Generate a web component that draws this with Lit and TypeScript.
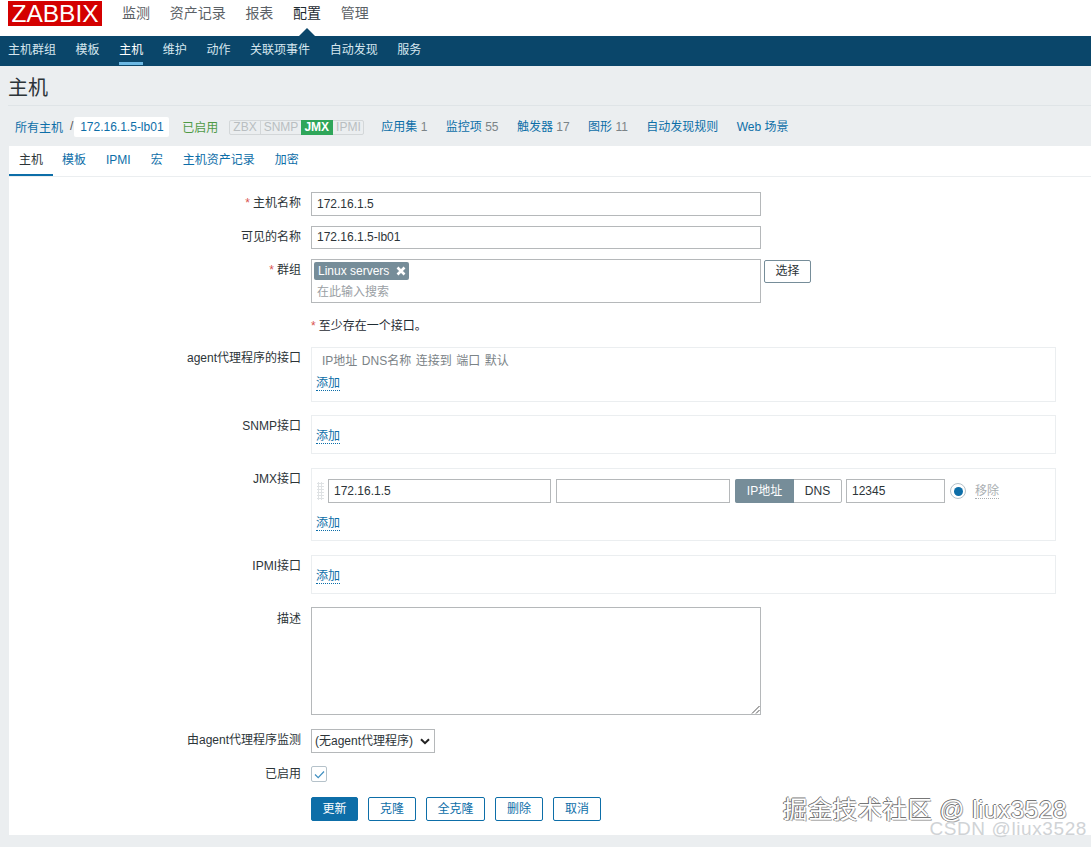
import { LitElement, html, css } from "lit";
import { customElement } from "lit/decorators.js";

@customElement("app-root")
export class AppRoot extends LitElement {
  static styles = css`
    :host { display: block; width: 1091px; height: 847px; position: relative; overflow: hidden; background: #ebeef0;
      font-family: "Liberation Sans", "Noto Sans CJK SC", sans-serif; font-size: 12px; color: #1f2c33; }
    * { box-sizing: border-box; }
    a { color: #0d6ea8; text-decoration: none; }
    .top { height: 36px; background: #fff; display: flex; align-items: flex-start; padding: 1px 0 0 8px; }
    .logo { width: 94px; height: 25px; background: #d40000; color: #fff; font-size: 24.5px; line-height: 26px; text-align: center; white-space: nowrap; }
    .mainnav { display: flex; gap: 19.7px; margin-left: 20px; font-size: 14px; line-height: 24px; color: #5b6166; }
    .mainnav .on { color: #1f2c33; position: relative; }
    .mainnav .on::after { content: ""; position: absolute; left: 50%; margin-left: -8px; top: 27px; border: 8px solid transparent; border-top: 0; border-bottom: 8px solid #0a466a; }
    .sub { height: 30px; background: #0a466a; display: flex; gap: 19.6px; padding-left: 8px; color: #d6e6ef; line-height: 28px; }
    .sub .on { color: #fff; border-bottom: 3px solid #6cb8e3; height: 29px; }
    h1 { margin: 0 0 0 8px; height: 39px; font-size: 20px; font-weight: 400; line-height: 44px; color: #2c3438; }
    .rule { height: 1px; background: #dfe4e7; margin-left: 8px; }
    .crumbs { height: 40px; display: flex; align-items: center; padding-left: 15px; white-space: nowrap; }
    .crumbs .sep { color: #555; margin: 0 1px 0 7px; }
    .crumbs .cur { background: #fff; border-radius: 2px; height: 20px; line-height: 20px; color: #0d6ea8; width: 95px; text-align: center; margin-top: 2px; }
    .crumbs .en { color: #4f9a45; margin-left: 13px; width: 47px; }
    .stat { display: flex; height: 15px; border: 1px solid #d3d7d9; border-radius: 2px; line-height: 13px; color: #b9bec1; width: 135px; margin-top: 2px; }
    .stat span { padding: 0 3px; flex: none; border-right: 1px solid #d3d7d9; }
    .stat span:last-child { border: 0; }
    .stat .jmx { background: #2fa65a; color: #fff; font-weight: 700; border-color: #2fa65a; height: 15px; margin: -1px 0 0 -1px; line-height: 15px; }
    .crumbs .gray { color: #7b8387; }
    .links { display: flex; margin: -1px 0 0 17px; gap: 18.4px; }
    .card { margin-left: 9px; height: 689px; background: #fff; }
    .tabs { height: 31px; display: flex; gap: 20px; border-bottom: 1px solid #ebeef0; line-height: 29px; }
    .tabs a { display: block; }
    .tabs .on { color: #2c3438; width: 44px; text-align: center; height: 30px; border-bottom: 2px solid #0d6ea8; margin-right: -11px; }
    .form { display: grid; grid-template-columns: 292px 745px; column-gap: 10px; padding-top: 15px; align-items: start; }
    .lab { text-align: right; line-height: 20px; padding-top: 1px; color: #2c3438; }
    .lab.short { height: 19px; }
    .req { color: #d9534f; margin-right: 3px; }
    .inp { border: 1px solid #b5b8ba; height: 24px; line-height: 22px; padding: 0 5px; background: #fff; color: #2c3438; white-space: nowrap; flex: none; }
    .w450 { width: 450px; }
    .h23 { height: 23px; line-height: 21px; }
    .mt10 { margin-top: 10px; }
    .mt12 { margin-top: 12px; }
    .mt13 { margin-top: 13px; }
    .mt14 { margin-top: 14px; }
    .groupwrap { display: flex; gap: 3px; }
    .group { width: 450px; height: 44px; border: 1px solid #b5b8ba; padding: 2px 2px; }
    .tag { display: inline-flex; align-items: center; gap: 7px; height: 18px; background: #768d99; color: #fff; border-radius: 2px; padding: 0 4px 1px; width: 95px; white-space: nowrap; }
    .tag svg { width: 10px; height: 10px; flex: none; }
    .ph { color: #9aa0a4; line-height: 18px; margin: 3px 0 0 3px; }
    .btn { border: 1px solid #768d99; border-radius: 2px; height: 23px; width: 47px; line-height: 21px; text-align: center; margin-top: 1px; color: #2c3438; }
    .note { line-height: 18px; }
    .box { border: 1px solid #ebeef0; padding: 5px 4px; }
    .b-agent { height: 55px; }
    .b-empty { height: 39px; padding-top: 13px; }
    .b-jmx { height: 73px; padding-top: 10px; }
    .heads { display: flex; gap: 4.5px; color: #7b8387; padding-left: 6px; height: 23px; line-height: 16px; }
    .add { display: inline-block; color: #0d6ea8; border-bottom: 1px dotted #0d6ea8; line-height: 15px; height: 15px; }
    .add.low { margin-top: 13px; }
    .jmxrow { display: flex; align-items: center; height: 24px; }
    .grip { width: 7px; height: 18px; margin: 0 4px 0 1px; background-image: radial-gradient(#dfe2e4 1px, transparent 1.1px); background-size: 3px 3px; }
    .w-ip { width: 223px; }
    .w-dns { width: 174px; margin-left: 5px; }
    .w-port { width: 99px; }
    .seg { display: flex; flex: none; width: 107px; height: 24px; margin: 0 4px 0 5px; border: 1px solid #b5b8ba; border-radius: 2px; line-height: 22px; text-align: center; color: #2c3438; }
    .seg b { font-weight: 400; width: 59px; background: #768d99; color: #fff; margin: -1px 0 -1px -1px; line-height: 24px; border-radius: 2px 0 0 2px; }
    .seg span { flex: 1; }
    .radio { width: 16px; height: 16px; border-radius: 50%; border: 1px solid #b5c2ca; margin: 0 0 0 5px; display: flex; align-items: center; justify-content: center; flex: none; }
    .radio i { width: 9px; height: 9px; border-radius: 50%; background: #0d6ea8; display: block; }
    .rm { color: #a9aeb1; border-bottom: 1px dotted #a9aeb1; line-height: 14px; margin-left: 9px; }
    .ta { width: 450px; height: 108px; border: 1px solid #b5b8ba; position: relative; }
    .ta svg { position: absolute; right: 0; bottom: 0; width: 9px; height: 9px; }
    .sel { width: 124px; height: 24px; border: 1px solid #b5b8ba; line-height: 22px; padding-left: 3px; display: flex; align-items: center; color: #2c3438; white-space: nowrap; }
    .sel svg { width: 10px; height: 7px; margin-left: 7px; }
    .cb { width: 16px; height: 16px; border: 1px solid #b5c2ca; border-radius: 2px; display: flex; align-items: center; justify-content: center; }
    .cb svg { width: 11px; height: 9px; }
    .actions { display: flex; gap: 10px; margin-top: 15px; grid-column: 2; }
    .actions span { height: 24px; width: 48px; border: 1px solid #0d6ea8; border-radius: 2px; color: #0d6ea8; line-height: 22px; text-align: center; }
    .actions .pri { background: #0d6ea8; color: #fff; width: 47px; }
    .actions .wide { width: 59px; }
    .wm { position: absolute; left: 783px; top: 796px; font-size: 24.4px; line-height: 28px; color: #fff; letter-spacing: .5px; text-shadow: -1px 0 #666, 0 -1px #777, 1px 1px #aaa; white-space: nowrap; }
    .wm2 { position: absolute; right: 4px; top: 818px; font-size: 19px; line-height: 21px; color: #d0d3d6; letter-spacing: .6px; white-space: nowrap; }
  `;

  render() {
    const x = html`<svg viewBox="0 0 10 10"><path d="M1.5 1.5l7 7M8.5 1.5l-7 7" stroke="#fff" stroke-width="2.6" fill="none"/></svg>`;
    return html`
      <div class="top">
        <div class="logo">ZABBIX</div>
        <div class="mainnav">
          <span>监测</span><span>资产记录</span><span>报表</span><span class="on">配置</span><span>管理</span>
        </div>
      </div>
      <div class="sub">
        <span>主机群组</span><span>模板</span><span class="on">主机</span><span>维护</span><span>动作</span><span>关联项事件</span><span>自动发现</span><span>服务</span>
      </div>
      <h1>主机</h1>
      <div class="rule"></div>
      <div class="crumbs">
        <a>所有主机</a><span class="sep">/</span><span class="cur">172.16.1.5-lb01</span>
        <span class="en">已启用</span>
        <div class="stat"><span>ZBX</span><span>SNMP</span><span class="jmx">JMX</span><span>IPMI</span></div>
        <div class="links">
          <span><a>应用集</a> <span class="gray">1</span></span>
          <span><a>监控项</a> <span class="gray">55</span></span>
          <span><a>触发器</a> <span class="gray">17</span></span>
          <span><a>图形</a> <span class="gray">11</span></span>
          <a>自动发现规则</a>
          <a>Web 场景</a>
        </div>
      </div>
      <div class="card">
        <div class="tabs">
          <a class="on">主机</a><a>模板</a><a>IPMI</a><a>宏</a><a>主机资产记录</a><a>加密</a>
        </div>
        <div class="form">
          <div class="lab"><span class="req">*</span>主机名称</div>
          <div class="inp w450">172.16.1.5</div>

          <div class="lab mt10">可见的名称</div>
          <div class="inp w450 h23 mt10">172.16.1.5-lb01</div>

          <div class="lab mt10"><span class="req">*</span>群组</div>
          <div class="groupwrap mt10">
            <div class="group">
              <div class="tag">Linux servers ${x}</div>
              <div class="ph">在此输入搜索</div>
            </div>
            <div class="btn">选择</div>
          </div>

          <div></div>
          <div class="note mt14"><span class="req">*</span>至少存在一个接口。</div>

          <div class="lab mt12">agent代理程序的接口</div>
          <div class="box b-agent mt12">
            <div class="heads"><span>IP地址</span><span>DNS名称</span><span>连接到</span><span>端口</span><span>默认</span></div>
            <a class="add">添加</a>
          </div>

          <div class="lab mt13">SNMP接口</div>
          <div class="box b-empty mt13"><a class="add">添加</a></div>

          <div class="lab mt14">JMX接口</div>
          <div class="box b-jmx mt14">
            <div class="jmxrow">
              <div class="grip"></div>
              <div class="inp w-ip">172.16.1.5</div>
              <div class="inp w-dns"></div>
              <div class="seg"><b>IP地址</b><span>DNS</span></div>
              <div class="inp w-port">12345</div>
              <div class="radio"><i></i></div>
              <span class="rm">移除</span>
            </div>
            <a class="add low">添加</a>
          </div>

          <div class="lab mt14">IPMI接口</div>
          <div class="box b-empty mt14"><a class="add">添加</a></div>

          <div class="lab mt14">描述</div>
          <div class="ta mt13">
            <svg viewBox="0 0 9 9"><path d="M8.5 1L1 8.5M8.5 5L5 8.5" stroke="#555" fill="none"/></svg>
          </div>

          <div class="lab mt14">由agent代理程序监测</div>
          <div class="sel mt14">(无agent代理程序)
            <svg viewBox="0 0 10 7"><path d="M1 1.2l4 4 4-4" stroke="#222" stroke-width="2" fill="none"/></svg>
          </div>

          <div class="lab short mt10">已启用</div>
          <div class="cb mt13">
            <svg viewBox="0 0 11 9"><path d="M1 4.5l3.2 3.2L10 1.5" stroke="#3f8fc0" stroke-width="1.2" fill="none"/></svg>
          </div>

          <div class="actions">
            <span class="pri">更新</span>
            <span>克隆</span>
            <span class="wide">全克隆</span>
            <span>删除</span>
            <span>取消</span>
          </div>
        </div>
      </div>
      <div class="wm">掘金技术社区 @ liux3528</div>
      <div class="wm2">CSDN @liux3528</div>
    `;
  }
}
